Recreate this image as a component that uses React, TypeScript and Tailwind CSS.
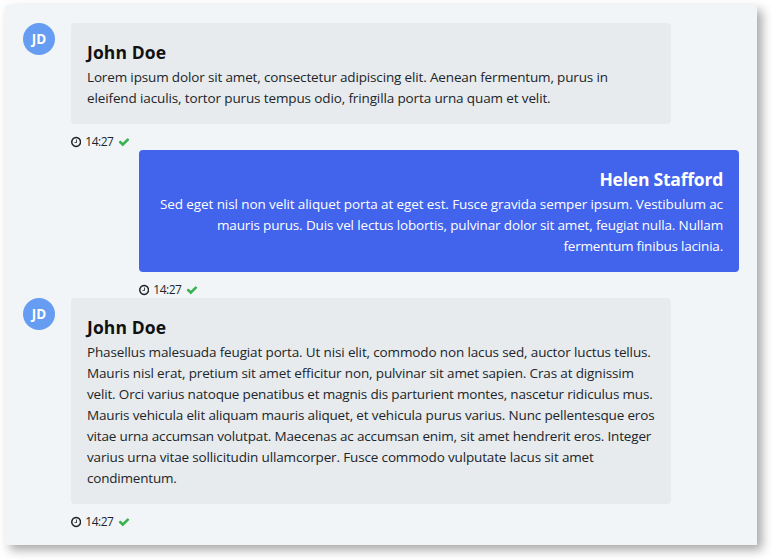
import React from "react";

type Line = { text: string; tracking: string };
type Message = {
  name: string;
  initials?: string;
  own?: boolean;
  lines: Line[];
};

const messages: Message[] = [
  {
    name: "John Doe",
    initials: "JD",
    lines: [
      { text: "Lorem ipsum dolor sit amet, consectetur adipiscing elit. Aenean fermentum, purus in", tracking: "tracking-[-0.15px]" },
      { text: "eleifend iaculis, tortor purus tempus odio, fringilla porta urna quam et velit.", tracking: "tracking-[-0.127px]" },
    ],
  },
  {
    name: "Helen Stafford",
    own: true,
    lines: [
      { text: "Sed eget nisl non velit aliquet porta at eget est. Fusce gravida semper ipsum. Vestibulum ac", tracking: "tracking-[-0.098px]" },
      { text: "mauris purus. Duis vel lectus lobortis, pulvinar dolor sit amet, feugiat nulla. Nullam", tracking: "tracking-[-0.148px]" },
      { text: "fermentum finibus lacinia.", tracking: "tracking-[-0.2px]" },
    ],
  },
  {
    name: "John Doe",
    initials: "JD",
    lines: [
      { text: "Phasellus malesuada feugiat porta. Ut nisi elit, commodo non lacus sed, auctor luctus tellus.", tracking: "tracking-[-0.138px]" },
      { text: "Mauris nisl erat, pretium sit amet efficitur non, pulvinar sit amet sapien. Cras at dignissim", tracking: "tracking-[-0.142px]" },
      { text: "velit. Orci varius natoque penatibus et magnis dis parturient montes, nascetur ridiculus mus.", tracking: "tracking-[-0.168px]" },
      { text: "Mauris vehicula elit aliquam mauris aliquet, et vehicula purus varius. Nunc pellentesque eros", tracking: "tracking-[-0.157px]" },
      { text: "vitae urna accumsan volutpat. Maecenas ac accumsan enim, sit amet hendrerit eros. Integer", tracking: "tracking-[-0.168px]" },
      { text: "varius urna vitae sollicitudin ullamcorper. Fusce commodo vulputate lacus sit amet", tracking: "tracking-[-0.15px]" },
      { text: "condimentum.", tracking: "tracking-[-0.2px]" },
    ],
  },
];

function ClockIcon() {
  return (
    <svg viewBox="0 0 1536 1792" className="h-3 w-[10.3px] fill-current">
      <path d="M896 544v448q0 14-9 23t-23 9h-320q-14 0-23-9t-9-23v-64q0-14 9-23t23-9h224v-352q0-14 9-23t23-9h64q14 0 23 9t9 23zm416 352q0-148-73-273t-198-198-273-73-273 73-198 198-73 273 73 273 198 198 273 73 273-73 198-198 73-273zm224 0q0 209-103 385.5t-279.5 279.5-385.5 103-385.5-103-279.5-279.5-103-385.5 103-385.5 279.5-279.5 385.5-103 385.5 103 279.5 279.5 103 385.5z" />
    </svg>
  );
}

function CheckIcon() {
  return (
    <svg viewBox="0 0 1792 1792" className="h-3 w-3 fill-[#37b24d]">
      <path d="M1671 566q0 40-28 68l-724 724-136 136q-28 28-68 28t-68-28l-136-136-362-362q-28-28-28-68t28-68l136-136q28-28 68-28t68 28l294 295 656-657q28-28 68-28t68 28l136 136q28 28 28 68z" />
    </svg>
  );
}

function ChatMessage({ message }: { message: Message }) {
  const { own, initials, name, lines } = message;
  return (
    <div className={own ? "flex justify-end" : "flex gap-4"}>
      {initials && (
        <div className="flex size-8 shrink-0 items-center justify-center rounded-full bg-[#669df2] text-[13.5px] font-bold text-white">
          {initials}
        </div>
      )}
      <div className="w-[600px]">
        <div
          className={
            own
              ? "rounded bg-[#4263eb] px-4 pt-4 pb-[15px] text-right text-white"
              : "rounded bg-[#e7ebee] px-4 pt-4 pb-[15px] text-[#212529]"
          }
        >
          <h2
            className={
              own
                ? "text-[17.5px] leading-[26px] font-bold tracking-[-0.22px]"
                : "text-[17.5px] leading-[26px] font-bold tracking-[0.1px] text-[#111]"
            }
          >
            {name}
          </h2>
          <div className="pt-0.5">
            {lines.map((line) => (
              <p key={line.text} className={`text-[13.5px] leading-[21px] whitespace-nowrap ${line.tracking}`}>
                {line.text}
              </p>
            ))}
          </div>
        </div>
        <div className="flex h-[26px] items-center pt-[10px] text-xs text-[#212529]">
          <ClockIcon />
          <span className="ml-1 w-[30px] tracking-[-0.5px]">14:27</span>
          <span className="ml-[3px]">
            <CheckIcon />
          </span>
        </div>
      </div>
    </div>
  );
}

export default function App() {
  return (
    <div className="h-[560px] w-[772px] overflow-hidden bg-white p-[5px] font-['Open_Sans','Noto_Sans',sans-serif]">
      <main className="h-[540px] w-[752px] bg-[#f1f5f8] px-[18px] pt-[18px] shadow-[5px_5px_10px_rgba(0,0,0,0.35)]">
        {messages.map((message, index) => (
          <ChatMessage key={index} message={message} />
        ))}
      </main>
    </div>
  );
}
